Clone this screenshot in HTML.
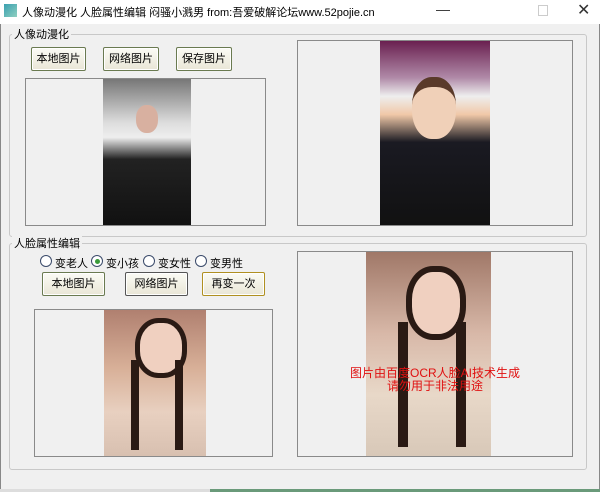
<html><head><style>
body{margin:0;width:600px;height:492px;background:#f0f0f0;font-family:"Liberation Sans","Noto Sans CJK SC",sans-serif;font-size:11px;position:relative;overflow:hidden;color:#000}
.a{position:absolute}
.g{position:absolute;border:1px solid #c8c8c8;border-radius:3px}
.l{position:absolute;background:#f0f0f0;padding:0 2px;font-size:11px}
.b{position:absolute;height:22px;border:1px solid #6a7a50;border-radius:2px;background:linear-gradient(#fbfbf5,#e9e6d6);text-align:center;line-height:22px;font-size:11px;box-shadow:inset 0 0 0 1px #fff}
.box{position:absolute;border:1px solid #8a8a8a;background:#f0f0f0;overflow:hidden}
.r{position:absolute;width:10px;height:10px;border:1px solid #3a4a6a;border-radius:50%;background:#fff}
</style></head><body>
<div class="a" style="left:0;top:0;width:600px;height:24px;background:#fff"></div>
<div class="a" style="left:4px;top:4px;width:13px;height:13px;background:linear-gradient(135deg,#3aa0b0,#8fd0c0)"></div>
<div class="a" style="left:22px;top:4px;font-size:11px">人像动漫化 人脸属性编辑 闷骚小溅男 from:吾爱破解论坛www.52pojie.cn</div>
<div class="a" style="left:436px;top:1px;font-size:14px;color:#333">—</div>
<div class="a" style="left:538px;top:5px;width:8px;height:9px;border:1px solid #ccc"></div>
<div class="a" style="left:577px;top:0px;font-size:16px;color:#333">✕</div>
<div class="a" style="left:0;top:24px;width:1px;height:466px;background:#888"></div>
<div class="a" style="left:599px;top:24px;width:1px;height:466px;background:#888"></div>
<div class="a" style="left:0;top:489px;width:600px;height:3px;background:#6a9a7a"></div>
<div class="a" style="left:0;top:489px;width:210px;height:3px;background:#ddd"></div>

<div class="g" style="left:9px;top:34px;width:576px;height:201px"></div>
<div class="l" style="left:12px;top:26px">人像动漫化</div>
<div class="b" style="left:31px;top:47px;width:53px">本地图片</div>
<div class="b" style="left:103px;top:47px;width:54px">网络图片</div>
<div class="b" style="left:176px;top:47px;width:54px">保存图片</div>
<div class="box" style="left:25px;top:78px;width:239px;height:146px"><div class="a" style="left:77px;top:0;width:88px;height:146px;background:linear-gradient(#777 0,#ddd 30%,#eee 40%,#222 55%,#111 100%)"></div><div class="a" style="left:110px;top:26px;width:22px;height:28px;border-radius:45%;background:#d8b0a0"></div></div>
<div class="box" style="left:297px;top:40px;width:274px;height:184px"><div class="a" style="left:82px;top:0;width:110px;height:184px;background:linear-gradient(#6a2050 0,#b08aa8 20%,#eee 30%,#f0c8a8 40%,#1a1a22 55%,#111 100%)"></div><div class="a" style="left:114px;top:36px;width:44px;height:52px;border-radius:45%;background:#f0d0b8;border-top:10px solid #5a3a2a"></div></div>

<div class="g" style="left:9px;top:243px;width:576px;height:225px"></div>
<div class="l" style="left:12px;top:235px">人脸属性编辑</div>
<div class="r" style="left:40px;top:255px"></div><div class="a" style="left:55px;top:255px">变老人</div>
<div class="r" style="left:91px;top:255px"></div><div class="a" style="left:95px;top:259px;width:5px;height:5px;border-radius:50%;background:#3a9a3a"></div><div class="a" style="left:106px;top:255px">变小孩</div>
<div class="r" style="left:143px;top:255px"></div><div class="a" style="left:158px;top:255px">变女性</div>
<div class="r" style="left:195px;top:255px"></div><div class="a" style="left:210px;top:255px">变男性</div>
<div class="b" style="left:42px;top:272px;width:61px">本地图片</div>
<div class="b" style="left:125px;top:272px;width:61px;border-color:#555">网络图片</div>
<div class="b" style="left:202px;top:272px;width:61px;border-color:#b09020">再变一次</div>
<div class="box" style="left:34px;top:309px;width:237px;height:146px"><div class="a" style="left:69px;top:0;width:102px;height:146px;background:linear-gradient(#b08070 0,#d8b098 40%,#e8d0c0 70%,#d8c0b0 100%)"></div><div class="a" style="left:100px;top:8px;width:42px;height:50px;border-radius:45%;background:#f0d0c0;border:5px solid #2a1a14"></div><div class="a" style="left:96px;top:50px;width:8px;height:90px;background:#2a1a14"></div><div class="a" style="left:140px;top:50px;width:8px;height:90px;background:#2a1a14"></div></div>
<div class="box" style="left:297px;top:251px;width:274px;height:204px"><div class="a" style="left:68px;top:0;width:125px;height:204px;background:linear-gradient(#a07868 0,#d8b8a8 40%,#e8d8c8 70%,#d8c8b8 100%)"></div><div class="a" style="left:108px;top:14px;width:48px;height:62px;border-radius:45%;background:#f0d0c0;border:6px solid #2a1a14"></div><div class="a" style="left:100px;top:70px;width:10px;height:125px;background:#2a1a14"></div><div class="a" style="left:158px;top:70px;width:10px;height:125px;background:#2a1a14"></div>
<div class="a" style="left:0;width:274px;top:115px;text-align:center;color:#e01010;font-size:12px;line-height:13px">图片由百度OCR人脸AI技术生成<br>请勿用于非法用途</div></div>
</body></html>
